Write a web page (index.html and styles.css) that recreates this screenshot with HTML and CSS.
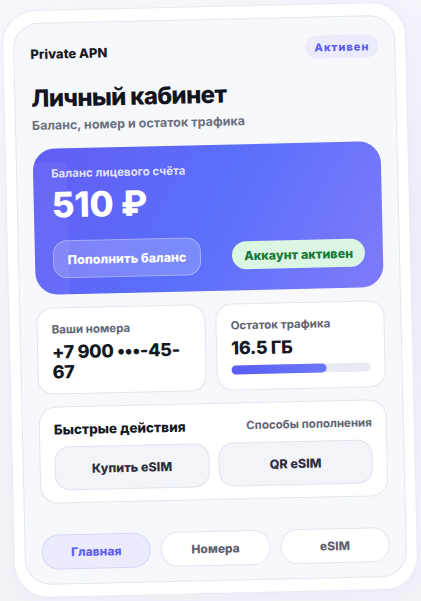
FILE: index.html
```html
<!DOCTYPE html>
<html lang="ru">
<head>
<meta charset="UTF-8">
<title>Private APN — Личный кабинет</title>
<meta name="viewport" content="width=device-width, initial-scale=1.0">
<link rel="stylesheet" href="styles.css">
</head>
<body>
<div class="frame">
<div class="panel">
<div class="top">
<span class="brand">Private APN</span>
<span class="status">Активен</span>
</div>

<h1 class="title">Личный кабинет</h1>
<p class="subtitle">Баланс, номер и остаток трафика</p>

<div class="balance">
<div class="balance-label">Баланс лицевого счёта</div>
<div class="balance-sum">510 ₽</div>
<div class="balance-row">
<button class="topup">Пополнить баланс</button>
<span class="ok">Аккаунт активен</span>
</div>
</div>

<div class="stats">
<div class="stat">
<div class="stat-label">Ваши номера</div>
<div class="stat-value">+7 900 •••-45-<wbr>67</div>
</div>
<div class="stat">
<div class="stat-label">Остаток трафика</div>
<div class="stat-value">16.5 ГБ</div>
<div class="bar"><div class="bar-fill" style="width: 68%"></div></div>
</div>
</div>

<div class="actions">
<div class="actions-head">
<span class="actions-title">Быстрые действия</span>
<span class="actions-link">Способы пополнения</span>
</div>
<div class="actions-grid">
<button class="act">Купить eSIM</button>
<button class="act">QR eSIM</button>
</div>
</div>

<nav class="tabs">
<button class="tab active">Главная</button>
<button class="tab">Номера</button>
<button class="tab">eSIM</button>
</nav>
</div>
</div>
</body>
</html>
```

FILE: styles.css
```css
html, body {
height: 100%;
}

body {
margin: 0;
overflow: hidden;
font-family: Inter, "Noto Sans", sans-serif;
color: #151923;
background:
radial-gradient(circle at 100% 40%, #eeeefb 0, rgba(238,238,251,0) 60%),
linear-gradient(160deg, #f6f7fb, #f1f2f8);
}

button {
font-family: inherit;
cursor: pointer;
}

/* внешняя рамка, слегка повернута */
.frame {
box-sizing: border-box;
width: 404px;
height: 588px;
margin: 6px 0 0 8px;
padding: 12px 10px;
background: #fff;
border: 1px solid #e8e9f3;
border-radius: 34px;
box-shadow: 0 4px 18px rgba(90,95,160,0.04);
transform: rotate(-1.3deg);
}

.panel {
box-sizing: border-box;
height: 100%;
display: flex;
flex-direction: column;
padding: 18px 16px 14px;
background: #f7f8fc;
border: 1px solid #e4e6f0;
border-radius: 26px;
}

.top {
display: flex;
justify-content: space-between;
align-items: center;
height: 23px;
}

.brand {
font-size: 13px;
font-weight: 800;
color: #161a26;
}

.status {
display: flex;
align-items: center;
height: 23px;
padding: 0 9px;
border-radius: 12px;
background: #ebebfb;
color: #5b5df0;
font-size: 11px;
font-weight: 800;
letter-spacing: 1px;
}

.title {
margin: 19px 0 0;
font-size: 24px;
line-height: 30px;
font-weight: 800;
letter-spacing: -0.7px;
color: #12151f;
}

.subtitle {
margin: 4px 0 0;
font-size: 12.5px;
line-height: 16px;
font-weight: 700;
color: #6b7080;
}

/* карточка баланса */
.balance {
position: relative;
overflow: hidden;
margin-top: 15px;
padding: 18px 18px 16px;
border-radius: 22px;
color: #fff;
background: linear-gradient(120deg, #625df5 0%, #5a6ffa 50%, #7f7bfb 100%);
}

.balance::before {
content: "";
position: absolute;
left: 0;
top: 14px;
bottom: 0;
width: 34px;
background: rgba(255,255,255,0.05);
}

.balance-label {
position: relative;
font-size: 11.5px;
line-height: 14px;
font-weight: 700;
color: rgba(255,255,255,0.82);
}

.balance-sum {
position: relative;
margin-top: 5px;
font-size: 35px;
line-height: 38px;
font-weight: 800;
letter-spacing: -0.3px;
}

.balance-row {
position: relative;
display: flex;
justify-content: space-between;
align-items: center;
margin-top: 17px;
}

.topup {
height: 38px;
width: 148px;
padding: 0;
border: 1px solid rgba(255,255,255,0.32);
border-radius: 14px;
background: rgba(255,255,255,0.2);
color: #fff;
font-size: 12.5px;
font-weight: 800;
}

.ok {
display: flex;
align-items: center;
height: 28px;
padding: 0 12px;
border-radius: 14px;
background: #dcf6e4;
color: #167a37;
font-size: 12.5px;
font-weight: 800;
}

/* номера и трафик */
.stats {
display: grid;
grid-template-columns: 1fr 1fr;
gap: 10px;
margin-top: 13px;
}

.stat {
height: 87px;
box-sizing: border-box;
padding: 14px 14px 0;
background: #fff;
border: 1px solid #e3e5ef;
border-radius: 16px;
}

.stat-label {
font-size: 11.5px;
line-height: 14px;
font-weight: 700;
color: #5f6474;
}

.stat-value {
margin-top: 6px;
font-size: 18px;
line-height: 20px;
font-weight: 800;
letter-spacing: -0.3px;
color: #141822;
}

.bar {
margin-top: 7px;
height: 9px;
border-radius: 5px;
background: #e8eaf2;
}

.bar-fill {
height: 100%;
border-radius: 5px;
background: linear-gradient(90deg, #5b5cf4, #6a78fb);
}

/* быстрые действия */
.actions {
margin-top: 12px;
padding: 13px 14px 12px;
background: #fff;
border: 1px solid #e3e5ef;
border-radius: 18px;
}

.actions-head {
display: flex;
justify-content: space-between;
align-items: center;
height: 18px;
}

.actions-title {
font-size: 13.5px;
font-weight: 800;
color: #141822;
}

.actions-link {
font-size: 11.5px;
font-weight: 700;
color: #5f6474;
}

.actions-grid {
display: grid;
grid-template-columns: 1fr 1fr;
gap: 9px;
margin-top: 8px;
}

.act {
height: 44px;
border: 1px solid #e0e2ee;
border-radius: 15px;
background: #f3f4f9;
color: #2c303d;
font-size: 12.5px;
font-weight: 800;
}

/* нижнее меню */
.tabs {
display: grid;
grid-template-columns: 1fr 1fr 1fr;
gap: 10px;
margin-top: auto;
}

.tab {
height: 35px;
border: 1px solid #e2e4ef;
border-radius: 17px;
background: #fff;
color: #5d6272;
font-size: 12px;
font-weight: 800;
}

.tab.active {
background: #ecebfd;
border-color: #d6d5fa;
color: #5f5ff0;
}
```
